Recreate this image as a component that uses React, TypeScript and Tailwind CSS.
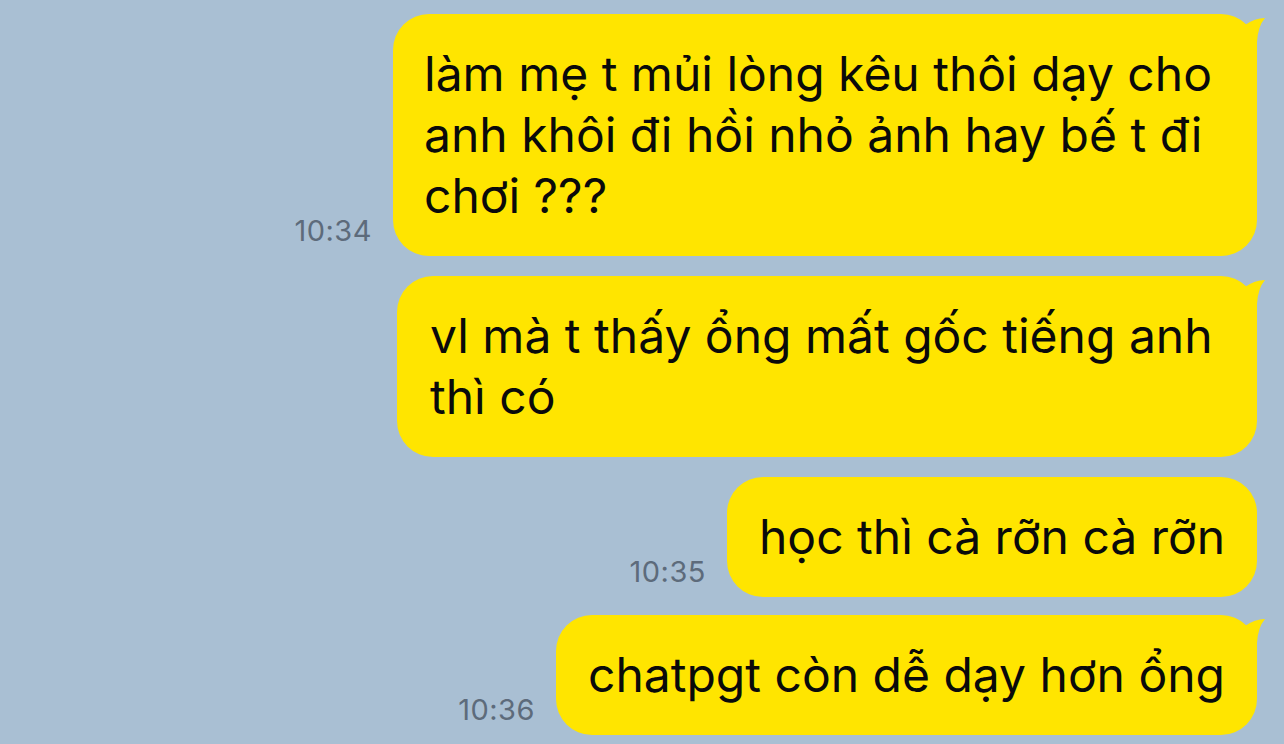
import React from "react";

const Tail = () => (
  <svg
    className="absolute top-0 right-[-9px]"
    width="52"
    height="40"
    viewBox="0 0 52 40"
  >
    <path
      d="M 4 1 Q 24 1 31 11 Q 41 4 51 4 Q 44 12 43 28 L 43 40 L 4 40 Z"
      fill="#ffe500"
    />
  </svg>
);

type Msg = {
  text: React.ReactNode;
  time?: string;
  tail?: boolean;
  cls: string;
  row: string;
};

const msgs: Msg[] = [
  {
    text: (
      <>
        làm mẹ t mủi lòng kêu thôi dạy cho
        <br />
        anh khôi đi hồi nhỏ ảnh hay bế t đi
        <br />
        chơi ???
      </>
    ),
    time: "10:34",
    tail: true,
    cls: "w-[864px] pl-[31px]",
    row: "",
  },
  {
    text: (
      <>
        vl mà t thấy ổng mất gốc tiếng anh
        <br />
        thì có
      </>
    ),
    tail: true,
    cls: "w-[860px] pl-[33px] pb-[28px]",
    row: "mt-[20px]",
  },
  { text: "học thì cà rỡn cà rỡn", time: "10:35", cls: "px-[32px]", row: "mt-[20px]" },
  {
    text: "chatpgt còn dễ dạy hơn ổng",
    time: "10:36",
    tail: true,
    cls: "px-[32px]",
    row: "mt-[18px]",
  },
];

export default function App() {
  return (
    <div
      className="w-[1284px] h-[744px] overflow-hidden bg-[#a9bfd3] flex flex-col items-end pt-[14px] pr-[27px]"
      style={{ fontFamily: "Inter, 'Noto Sans', sans-serif" }}
    >
      {msgs.map((m, i) => (
        <div key={i} className={`flex items-end gap-[21px] ${m.row}`}>
          {m.time && (
            <span className="text-[29px] leading-none tracking-[0.5px] text-[#5d6b7b] mb-[11px]">
              {m.time}
            </span>
          )}
          <div
            className={`relative bg-[#ffe500] rounded-[36px] pt-[29px] pb-[30px] text-[48px] leading-[61px] text-[#0a0a0a] whitespace-nowrap ${m.cls}`}
          >
            {m.tail && <Tail />}
            <span className="relative">{m.text}</span>
          </div>
        </div>
      ))}
    </div>
  );
}
